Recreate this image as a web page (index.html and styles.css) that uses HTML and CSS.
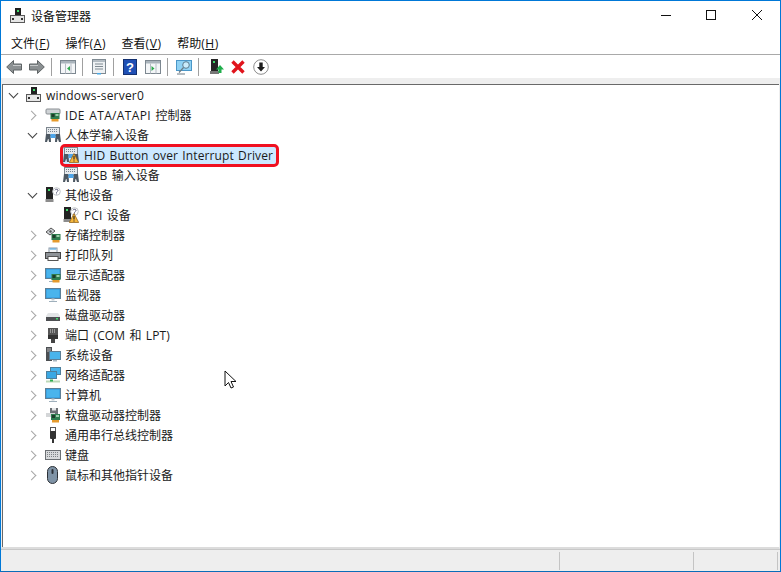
FILE: index.html
```html
<!DOCTYPE html>
<html lang="zh-CN">
<head>
<meta charset="utf-8">
<title>设备管理器</title>
<link rel="stylesheet" href="styles.css">
</head>
<body>
<svg class="defs" width="0" height="0" aria-hidden="true">
  <defs>
    <symbol id="tower" viewBox="0 0 16 16">
      <rect x="5" y="0" width="6" height="8" fill="#1f1f1f"/><rect x="7" y="2" width="2" height="2" fill="#3fdc6a"/>
      <rect x="0.500" y="7.500" width="14" height="7" fill="#e6e6e6" stroke="#5a5a5a"/>
      <rect x="2" y="10" width="2" height="2" fill="#333"/><rect x="11" y="10" width="2" height="2" fill="#333"/>
    </symbol>
    <symbol id="hid" viewBox="0 0 16 16">
      <rect x="1.500" y="0.500" width="13" height="8" fill="#e6eaed" stroke="#7d868e"/>
      <path d="M3 2.500h1M5 2.500h1M7 2.500h1M9 2.500h1M11 2.500h1M3 4.500h1M5 4.500h1M7 4.500h1M9 4.500h1M11 4.500h1" stroke="#7a858f"/>
      <path d="M1 7h4.500l.5 8H4l-.5-3H3l-1 3H0zM10.500 7H15l1 8h-2l-1-3h-.5L12 15h-2z" fill="#4d5862"/>
      <rect x="5.500" y="7" width="5" height="4" fill="#4ea6ea"/>
    </symbol>
    <symbol id="warn" viewBox="0 0 10 10">
      <path d="M5 .5L9.700 9.500H.3z" fill="#f6b73c" stroke="#8a5a10" stroke-width=".7"/>
      <path d="M5 3v3.600M5 7.500v1" stroke="#222" stroke-width="1.100"/>
    </symbol>
    <symbol id="unknown" viewBox="0 0 16 16">
      <rect x="1" y="0" width="7" height="12" fill="#222"/><rect x="3" y="2" width="2" height="2" fill="#3fdc6a"/>
      <rect x="0.500" y="12" width="8" height="3" fill="#8c8c8c"/>
      <circle cx="11.500" cy="4.500" r="3.800" fill="#fff" stroke="#c0c4c8"/>
      <path d="M10 3.300c.4-1.400 3-1.400 3 .2 0 1-1.500 1-1.500 2.200M11.500 6.500v.8" fill="none" stroke="#446" stroke-width=".9"/>
    </symbol>
    <symbol id="card" viewBox="0 0 9 9">
      <rect x="0" y="0" width="9" height="6" fill="#2f7d4f"/><rect x="1" y="1" width="3" height="3" fill="#1e3d2a"/><rect x="5" y="1" width="3" height="2" fill="#9ad0a8"/>
      <path d="M1 6h7v2.500H1z" fill="#e59a2c"/>
    </symbol>
    <symbol id="monitor" viewBox="0 0 16 16">
      <rect x="0.500" y="1.500" width="15" height="10" fill="#2f93d8" stroke="#5d7f96"/>
      <rect x="1.500" y="2.500" width="13" height="8" fill="#49b4ec"/>
      <path d="M6.500 11.500h3v2h-3z" fill="#c3ccd2"/><path d="M4 14h8v1H4z" fill="#9fb0bc"/>
    </symbol>
    <symbol id="win-view" viewBox="0 0 16 16">
      <rect x="0.500" y="1.500" width="15" height="13" fill="#f4f6f8" stroke="#7c8790"/>
      <rect x="1" y="2" width="14" height="2.500" fill="#aab4bc"/>
      <path d="M5.500 4.500v10M11 4.500v10" stroke="#b4bcc4"/>
    </symbol>
  </defs>
</svg>

<div class="window">
  <header class="titlebar">
    <svg class="title-icon"><use href="#tower"/></svg>
    <h1 class="title">设备管理器</h1>
    <div class="controls">
      <svg class="ctl" viewBox="0 0 46 30"><path d="M19 14.500h10" stroke="#111"/></svg>
      <svg class="ctl" viewBox="0 0 46 30"><rect x="18.500" y="9.500" width="9" height="9" fill="none" stroke="#111"/></svg>
      <svg class="ctl" viewBox="0 0 46 30"><path d="M18 9l10 10M28 9L18 19" stroke="#111" fill="none"/></svg>
    </div>
  </header>

  <nav class="menubar">
    <span class="menu">文件<span class="acc">(<u>F</u>)</span></span>
    <span class="menu">操作<span class="acc">(<u>A</u>)</span></span>
    <span class="menu">查看<span class="acc">(<u>V</u>)</span></span>
    <span class="menu">帮助<span class="acc">(<u>H</u>)</span></span>
  </nav>

  <div class="toolbar">
    <svg class="tb tb-first" viewBox="0 0 16 16"><path d="M.7 8L7.500 1.500V5h8v6h-8v3.500z" fill="#8b9092" stroke="#5f6466"/><path d="M7 6.500h8" stroke="#c6c9ca"/></svg>
    <svg class="tb" viewBox="0 0 16 16"><path d="M15.300 8L8.500 1.500V5h-8v6h8v3.500z" fill="#8b9092" stroke="#5f6466"/><path d="M1 6.500h8" stroke="#c6c9ca"/></svg>
    <i class="sep"></i>
    <svg class="tb" viewBox="0 0 16 16"><use href="#win-view"/><path d="M10 7v5L7 9.500z" fill="#2ca84c"/></svg>
    <i class="sep"></i>
    <svg class="tb" viewBox="0 0 16 16"><rect x="1.500" y="0.500" width="13" height="14" fill="#eef1f3" stroke="#7f8a92"/><rect x="2" y="1" width="12" height="2" fill="#b3bcc3"/><path d="M4 5h8M4 7.500h8M4 10h8" stroke="#7f8a92"/><rect x="6" y="14" width="4" height="1.500" fill="#49a9e6"/></svg>
    <i class="sep"></i>
    <svg class="tb tb-first" viewBox="0 0 16 16"><rect x="1.500" y="0.500" width="13" height="15" fill="#1f4fb4" stroke="#13306f"/><text class="help-q" x="8" y="12.500" text-anchor="middle">?</text></svg>
    <svg class="tb" viewBox="0 0 16 16"><use href="#win-view"/><path d="M6.500 7v5l3-2.500z" fill="#2ca84c"/></svg>
    <i class="sep"></i>
    <svg class="tb" viewBox="0 0 16 16"><rect x="0.500" y="1.500" width="15" height="10" fill="#8fd2f4" stroke="#4b97c8"/><circle cx="10" cy="6" r="3.300" fill="#c9ecfb" stroke="#5c7d90"/><path d="M7.500 8.500L3 13.500M1 15h8" stroke="#6b7b85" stroke-width="1.200"/></svg>
    <i class="sep sep-wide"></i>
    <svg class="tb" viewBox="0 0 16 16"><rect x="3" y="0" width="7" height="12" fill="#252525"/><rect x="5" y="2" width="2" height="2" fill="#3fdc6a"/><rect x="2" y="12" width="9" height="3" fill="#777"/><path d="M12 6l4 4.500h-2.500V14h-3v-3.500H8z" fill="#1fae4b"/></svg>
    <svg class="tb tb-first" viewBox="0 0 16 16"><path d="M2.500 2.500L13.500 13.500M13.500 2.500L2.500 13.500" stroke="#e0141c" stroke-width="3.400"/></svg>
    <svg class="tb" viewBox="0 0 16 16"><circle cx="8" cy="8" r="7.300" fill="#fff" stroke="#8c8c8c"/><path d="M6.300 3.500h3.400V8H12L8 12.500 4 8h2.300z" fill="#1c1c1c"/></svg>
  </div>

  <main class="panel">
    <ul class="tree">
      <li class="row root"><span class="tw open"></span><svg class="ico"><use href="#tower"/></svg><span class="lbl lat-loose">windows-server0</span></li>
      <li class="row"><span class="tw"></span><svg class="ico" viewBox="0 0 16 16"><rect x="1" y="2" width="14" height="5" rx="1" fill="#cfd3d6" stroke="#8a8f93"/><use href="#card" x="5" y="6" width="10" height="9"/></svg><span class="lbl"><span class="lat lat-wide">IDE ATA/ATAPI </span>控制器</span></li>
      <li class="row"><span class="tw open"></span><svg class="ico"><use href="#hid"/></svg><span class="lbl">人体学输入设备</span></li>
      <li class="row l2"><span class="selected"><svg class="ico" viewBox="0 0 16 16"><use href="#hid"/><use href="#warn" x="6" y="6" width="10" height="10"/></svg><span class="lbl lat">HID Button over Interrupt Driver</span></span></li>
      <li class="row l2"><svg class="ico"><use href="#hid"/></svg><span class="lbl"><span class="lat">USB </span>输入设备</span></li>
      <li class="row"><span class="tw open"></span><svg class="ico"><use href="#unknown"/></svg><span class="lbl">其他设备</span></li>
      <li class="row l2"><svg class="ico" viewBox="0 0 16 16"><use href="#unknown"/><use href="#warn" x="6" y="6" width="10" height="10"/></svg><span class="lbl"><span class="lat">PCI </span>设备</span></li>
      <li class="row"><span class="tw"></span><svg class="ico" viewBox="0 0 16 16"><path d="M1 5l5-4 4 3-5 4z" fill="#d0d4d8" stroke="#555"/><circle cx="5.500" cy="4.500" r="1.200" fill="#555"/><use href="#card" x="6" y="7" width="10" height="9"/></svg><span class="lbl">存储控制器</span></li>
      <li class="row"><span class="tw"></span><svg class="ico" viewBox="0 0 16 16"><rect x="4" y="1" width="8" height="5" fill="#f4f6f8" stroke="#89a"/><rect x="0.500" y="5.500" width="15" height="6" fill="#8e9398" stroke="#444"/><rect x="3" y="9.500" width="10" height="4" fill="#fff" stroke="#555"/><path d="M5 2h6" stroke="#3aa0e0"/></svg><span class="lbl">打印队列</span></li>
      <li class="row"><span class="tw"></span><svg class="ico" viewBox="0 0 16 16"><use href="#monitor"/><use href="#card" x="6" y="7" width="10" height="9"/></svg><span class="lbl">显示适配器</span></li>
      <li class="row"><span class="tw"></span><svg class="ico"><use href="#monitor"/></svg><span class="lbl">监视器</span></li>
      <li class="row"><span class="tw"></span><svg class="ico" viewBox="0 0 16 16"><path d="M3 6h10l2 3v4H1V9z" fill="#e2e4e6"/><rect x="1" y="10" width="14" height="4" fill="#4d4f52"/><rect x="11" y="11" width="2" height="1.500" fill="#3fdc6a"/></svg><span class="lbl">磁盘驱动器</span></li>
      <li class="row"><span class="tw"></span><svg class="ico" viewBox="0 0 16 16"><rect x="3" y="1" width="10" height="9" fill="#555"/><path d="M5 3h6M5 5h6" stroke="#ddd" stroke-dasharray="1 1"/><rect x="3" y="8" width="10" height="4" fill="#333"/><rect x="6" y="12" width="4" height="4" fill="#444"/></svg><span class="lbl"><span class="lat">端口 (COM 和 LPT)</span></span></li>
      <li class="row"><span class="tw"></span><svg class="ico" viewBox="0 0 16 16"><rect x="1" y="0" width="6" height="14" fill="#4c4f52"/><path d="M2 2h4M2 4h4" stroke="#bbb"/><rect x="4.500" y="4.500" width="11" height="8" fill="#49b4ec" stroke="#5d7f96"/><path d="M8 13h4v1.500H8z" fill="#a9b7c0"/></svg><span class="lbl">系统设备</span></li>
      <li class="row"><span class="tw"></span><svg class="ico" viewBox="0 0 16 16"><rect x="5.500" y="0.500" width="10" height="7" fill="#49b4ec" stroke="#4f7f9c"/><rect x="1.500" y="4.500" width="10" height="7" fill="#3aa8e4" stroke="#4f7f9c"/><path d="M1 13.500h14v2H1z" fill="#bcd8b8"/><path d="M5 12.500h3v2H5z" fill="#2fae52"/></svg><span class="lbl">网络适配器</span></li>
      <li class="row"><span class="tw"></span><svg class="ico"><use href="#monitor"/></svg><span class="lbl">计算机</span></li>
      <li class="row"><span class="tw"></span><svg class="ico" viewBox="0 0 16 16"><rect x="5" y="1" width="8" height="6" fill="#6c7074"/><rect x="7" y="1" width="4" height="2.500" fill="#e3e5e7"/><rect x="1" y="6" width="9" height="4" fill="#d4d6d8"/><use href="#card" x="5" y="7" width="11" height="9"/></svg><span class="lbl">软盘驱动器控制器</span></li>
      <li class="row"><span class="tw"></span><svg class="ico" viewBox="0 0 16 16"><rect x="5.500" y="0.500" width="5" height="4" fill="#fff" stroke="#555"/><rect x="5" y="4" width="6" height="8" rx="1" fill="#333"/><rect x="7" y="12" width="2" height="4" fill="#333"/></svg><span class="lbl">通用串行总线控制器</span></li>
      <li class="row"><span class="tw"></span><svg class="ico" viewBox="0 0 16 16"><rect x="0.500" y="3.500" width="15" height="9" fill="#d8dadc" stroke="#6c7074"/><path d="M2 5.500h12M2 7.500h12M2 9.500h12" stroke="#7e8286" stroke-dasharray="1 1"/></svg><span class="lbl">键盘</span></li>
      <li class="row"><span class="tw"></span><svg class="ico ico-tall" viewBox="0 -1 16 18"><rect x="2.500" y="-0.500" width="10" height="17" rx="5" fill="#7f93a6" stroke="#2c3036"/><rect x="6.500" y="2" width="2" height="5" rx="1" fill="#2c3036"/></svg><span class="lbl">鼠标和其他指针设备</span></li>
    </ul>
    <svg class="cursor" viewBox="0 0 13 19"><path d="M1 1v15l3.500-3.500 2.500 5.500 2.500-1-2.500-5.500H12z" fill="#fff" stroke="#111"/></svg>
  </main>

  <footer class="statusbar">
    <span class="cell cell-main"></span>
    <span class="cell cell-mid"></span>
    <span class="cell cell-end"></span>
  </footer>
</div>
</body>
</html>
```
FILE: styles.css
```css
* { box-sizing: border-box; }
html, body { margin: 0; padding: 0; }
body {
  width: 781px;
  height: 572px;
  overflow: hidden;
  background: #fff;
  font-family: "Open Sans", "Noto Sans CJK SC", sans-serif;
  font-size: 12px;
  color: #1a1a1a;
}
.defs { position: absolute; }
.window {
  width: 781px;
  height: 572px;
  display: flex;
  flex-direction: column;
  border: 1px solid #0078d7;
  border-bottom-color: #0a6cb8;
  background: #fff;
}
.titlebar { height: 30px; display: flex; align-items: center; padding-left: 9px; flex: none; }
.title-icon { width: 16px; height: 16px; flex: none; }
.title { margin: 0 0 0 5px; font-size: 12px; font-weight: 400; color: #111; flex: 1; }
.controls { display: flex; align-self: flex-start; }
.ctl { width: 46px; height: 30px; display: block; }
.menubar { height: 24px; display: flex; align-items: center; flex: none; border-bottom: 1px solid #a9a9a9; padding-left: 3px; }
.menu { padding: 0 7px; margin-right: 1.5px; color: #111; }
.acc { letter-spacing: 0.6px; }
.toolbar { height: 23px; display: flex; align-items: center; flex: none; padding-left: 5px; background: #fff; }
.tb { width: 16px; height: 16px; margin-right: 6px; flex: none; }
.tb-first { margin-right: 7px; }
.help-q { font: 700 13px "Liberation Sans", sans-serif; fill: #fff; }
.sep { width: 1px; height: 18px; background: #a0a0a0; margin-right: 8px; flex: none; }
.sep-wide { margin-right: 9px; }
.panel {
  position: relative;
  flex: 1;
  min-height: 0;
  background: #fff;
  border-top: 6px solid #eeeeee;
  box-shadow: inset 1px 1px 0 #696969;
  border-left: 1px solid #eeeeee;
  border-right: 1px solid #eeeeee;
  border-bottom: 2px solid #dcdcdc;
}
.tree { list-style: none; margin: 0; padding: 1px 0 0 0; }
.row { height: 20px; display: flex; align-items: center; padding-left: 25px; white-space: nowrap; }
.row.root { padding-left: 6px; }
.row.l2 { padding-left: 61px; }
.tw { width: 12px; height: 12px; margin-right: 6px; flex: none; position: relative; }
.tw::before {
  content: "";
  position: absolute;
  left: 1px;
  top: 3px;
  width: 6px;
  height: 6px;
  border-right: 1.5px solid #a6a6a6;
  border-top: 1.5px solid #a6a6a6;
  transform: rotate(45deg);
}
.tw.open::before { left: 2px; top: 1px; border-color: #404040; transform: rotate(135deg); }
.ico { width: 16px; height: 16px; flex: none; }
.ico-tall { height: 18px; }
.lbl { margin-left: 4px; color: #1a1a1a; }
.l2 .lbl { margin-left: 5px; }
.lat { letter-spacing: 0.12px; word-spacing: 1px; }
.lat-loose { letter-spacing: 0.2px; }
.lat-wide { letter-spacing: 0.35px; }
.selected {
  display: inline-flex;
  align-items: center;
  flex: none;
  height: 23px;
  margin-left: -3px;
  padding: 0 3px 0 0;
  background: #cce8ff;
  border: 3px solid #f01020;
  border-radius: 5px;
}
.cursor { position: absolute; left: 222px; top: 286px; width: 13px; height: 19px; }
.statusbar {
  height: 22px;
  flex: none;
  display: flex;
  background: #eeeeee;
  border-top: 1px solid #c8c8c8;
  padding: 2px 0 1px 0;
}
.cell { display: block; border-right: 1px solid #c4c4c4; height: 100%; }
.cell-main { width: 559px; }
.cell-mid { width: 134px; }
.cell-end { width: 84px; }
```
